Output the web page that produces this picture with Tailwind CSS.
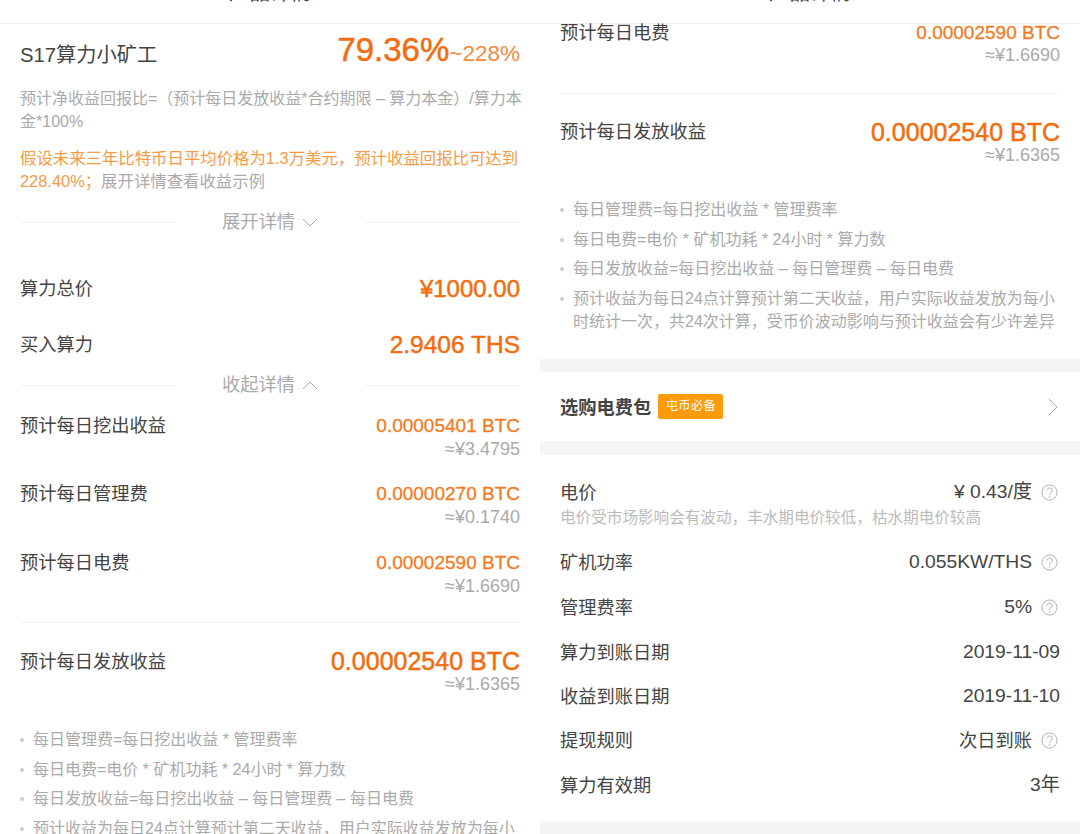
<!DOCTYPE html>
<html lang="zh-CN">
  <head>
    <meta charset="UTF-8" />
    <title>算力详情</title>
    <script src="https://cdn.jsdelivr.net/npm/@tailwindcss/browser@4"></script>
  </head>
  <body class="bg-white font-['Liberation_Sans','Noto_Sans_CJK_SC',sans-serif] text-[#444] text-[18.25px]">
    <div class="flex w-[1080px] h-[834px] overflow-hidden">
      <!-- left phone -->
      <div class="w-[540px] h-[834px] overflow-hidden flex flex-col">
        <div class="h-6 shrink-0 border-b border-[#f0f0f0] flex justify-center items-end overflow-hidden">
          <span class="text-[20.5px] leading-6 mb-[18px] text-[#444]">产品详情</span>
        </div>
        <div class="px-5">
          <div class="flex justify-between items-center h-[50px] mt-[3px]">
            <span class="text-[20.25px] mt-[6px]">S17算力小矿工</span>
            <span class="text-[#f26d0f] mt-[-4px]"><span class="text-[33px] [-webkit-text-stroke:0.5px_#f26d0f]">79.36%</span><span class="text-[#f58a3c] text-[22.5px]">~228%</span></span>
          </div>
          <p class="mt-[10px] text-[16px] leading-[23px] text-[#aaa] whitespace-nowrap">预计净收益回报比=（预计每日发放收益*合约期限 – 算力本金）/算力本<br />金*100%</p>
          <p class="mt-[14px] text-[16.4px] leading-[23px] text-[#f79a45] whitespace-nowrap">假设未来三年比特币日平均价格为1.3万美元，预计收益回报比可达到<br />228.40%；<span class="text-[#aaa]">展开详情查看收益示例</span></p>
          <div class="flex items-center h-6 mt-[17px]">
            <div class="w-[156px] border-t border-[#f2f2f2]"></div>
            <div class="flex-1 flex justify-center items-center gap-[7px] text-[#aaa]">展开详情
              <svg width="16" height="9" viewBox="0 0 16 9" fill="none" stroke="#aaa"><path d="M1 1l7 7 7-7" /></svg>
            </div>
            <div class="w-[156px] border-t border-[#f2f2f2]"></div>
          </div>
          <div class="flex justify-between items-center h-8 mt-[39px]">
            <span>算力总价</span><span class="text-[#f26d0f] text-2xl [-webkit-text-stroke:0.5px_#f26d0f]">¥1000.00</span>
          </div>
          <div class="flex justify-between items-center h-8 mt-6">
            <span>买入算力</span><span class="text-[#f26d0f] text-[24.5px] [-webkit-text-stroke:0.5px_#f26d0f]">2.9406 THS</span>
          </div>
          <div class="flex items-center h-6 mt-[12px]">
            <div class="w-[156px] border-t border-[#f2f2f2]"></div>
            <div class="flex-1 flex justify-center items-center gap-[7px] text-[#aaa]">收起详情
              <svg width="16" height="9" viewBox="0 0 16 9" fill="none" stroke="#aaa"><path d="M1 8l7-7 7 7" /></svg>
            </div>
            <div class="w-[156px] border-t border-[#f2f2f2]"></div>
          </div>
          <div class="flex justify-between mt-[17px] h-[46px]">
            <span class="leading-6">预计每日挖出收益</span>
            <div class="text-right"><div class="text-[19px] leading-6 text-[#f47a22] [-webkit-text-stroke:0.3px_#f47a22]">0.00005401 BTC</div><div class="text-[18px] leading-[22px] text-[#aaa]">≈¥3.4795</div></div>
          </div>
          <div class="flex justify-between mt-[22px] h-[46px]">
            <span class="leading-6">预计每日管理费</span>
            <div class="text-right"><div class="text-[19px] leading-6 text-[#f47a22] [-webkit-text-stroke:0.3px_#f47a22]">0.00000270 BTC</div><div class="text-[18px] leading-[22px] text-[#aaa]">≈¥0.1740</div></div>
          </div>
          <div class="flex justify-between mt-[23px] h-[46px]">
            <span class="leading-6">预计每日电费</span>
            <div class="text-right"><div class="text-[19px] leading-6 text-[#f47a22] [-webkit-text-stroke:0.3px_#f47a22]">0.00002590 BTC</div><div class="text-[18px] leading-[22px] text-[#aaa]">≈¥1.6690</div></div>
          </div>
          <div class="border-t border-[#f2f2f2] mt-[25px]"></div>
          <div class="flex justify-between mt-[24px] h-[50px]">
            <span class="leading-7 mt-[1px]">预计每日发放收益</span>
            <div class="text-right"><div class="text-[25px] leading-7 text-[#f26d0f] [-webkit-text-stroke:0.5px_#f26d0f]">0.00002540 BTC</div><div class="text-[18px] leading-[18px] text-[#aaa]">≈¥1.6365</div></div>
          </div>
          <ul class="mt-[31px] text-[16px] text-[#aaa] leading-[23px] space-y-[6.5px]">
            <li class="flex gap-[9px]"><span class="w-1 h-1 shrink-0 mt-[10px] rounded-full bg-[#ccc]"></span>每日管理费=每日挖出收益 * 管理费率</li>
            <li class="flex gap-[9px]"><span class="w-1 h-1 shrink-0 mt-[10px] rounded-full bg-[#ccc]"></span>每日电费=电价 * 矿机功耗 * 24小时 * 算力数</li>
            <li class="flex gap-[9px]"><span class="w-1 h-1 shrink-0 mt-[10px] rounded-full bg-[#ccc]"></span>每日发放收益=每日挖出收益 – 每日管理费 – 每日电费</li>
            <li class="flex gap-[9px]"><span class="w-1 h-1 shrink-0 mt-[10px] rounded-full bg-[#ccc]"></span><span class="whitespace-nowrap">预计收益为每日24点计算预计第二天收益，用户实际收益发放为每小<br />时统计一次，共24次计算，受币价波动影响与预计收益会有少许差异</span></li>
          </ul>
        </div>
      </div>
      <!-- right phone -->
      <div class="w-[540px] h-[834px] overflow-hidden flex flex-col">
        <div class="h-6 shrink-0 border-b border-[#f0f0f0] flex justify-center items-end overflow-hidden">
          <span class="text-[20.5px] leading-6 mb-[18px] text-[#444]">产品详情</span>
        </div>
        <div class="px-5">
          <div class="flex justify-between h-[46px]">
            <span class="leading-[18px]">预计每日电费</span>
            <div class="text-right"><div class="text-[19px] leading-[18px] text-[#f47a22] [-webkit-text-stroke:0.3px_#f47a22]">0.00002590 BTC</div><div class="text-[18px] leading-[26px] text-[#aaa]">≈¥1.6690</div></div>
          </div>
          <div class="border-t border-[#f2f2f2] mt-[23px]"></div>
          <div class="flex justify-between mt-[24px] h-[50px]">
            <span class="leading-7">预计每日发放收益</span>
            <div class="text-right"><div class="text-[25px] leading-7 text-[#f26d0f] [-webkit-text-stroke:0.5px_#f26d0f]">0.00002540 BTC</div><div class="text-[18px] leading-[18px] text-[#aaa]">≈¥1.6365</div></div>
          </div>
          <ul class="mt-[30px] text-[16px] text-[#aaa] leading-[23px] space-y-[6.5px]">
            <li class="flex gap-[9px]"><span class="w-1 h-1 shrink-0 mt-[10px] rounded-full bg-[#ccc]"></span>每日管理费=每日挖出收益 * 管理费率</li>
            <li class="flex gap-[9px]"><span class="w-1 h-1 shrink-0 mt-[10px] rounded-full bg-[#ccc]"></span>每日电费=电价 * 矿机功耗 * 24小时 * 算力数</li>
            <li class="flex gap-[9px]"><span class="w-1 h-1 shrink-0 mt-[10px] rounded-full bg-[#ccc]"></span>每日发放收益=每日挖出收益 – 每日管理费 – 每日电费</li>
            <li class="flex gap-[9px]"><span class="w-1 h-1 shrink-0 mt-[10px] rounded-full bg-[#ccc]"></span><span class="whitespace-nowrap">预计收益为每日24点计算预计第二天收益，用户实际收益发放为每小<br />时统计一次，共24次计算，受币价波动影响与预计收益会有少许差异</span></li>
          </ul>
        </div>
        <div class="h-[13px] bg-[#f5f5f5] mt-[26px] shrink-0"></div>
        <div class="h-[69px] shrink-0 px-5 flex items-center">
          <span class="font-bold mt-[3px]">选购电费包</span>
          <span class="ml-[7px] h-[25px] w-[65px] bg-[#ff9a0a] rounded-[2px] text-white text-[12.5px] flex items-center justify-center">屯币必备</span>
          <svg class="ml-auto mr-[1px] mt-[1px]" width="11" height="18" viewBox="0 0 11 18" fill="none" stroke="#aaa"><path d="M1 1l8 8-8 8" /></svg>
        </div>
        <div class="h-[14px] bg-[#f5f5f5] shrink-0"></div>
        <div class="px-5">
          <div class="mt-[26px] flex justify-between items-center h-6">
            <span>电价</span>
            <span class="flex items-center gap-[9px] mr-[2px] text-[19.25px]">¥ 0.43/度
              <svg width="17" height="17" viewBox="0 0 18 18" fill="none" stroke="#aaa"><circle cx="9" cy="9" r="8" /><path d="M6.3 7a2.8 2.8 0 1 1 4.3 2.3c-1 .6-1.6 1.1-1.6 2.2" /><circle cx="9" cy="13.8" r=".4" /></svg>
            </span>
          </div>
          <p class="text-[15.6px] leading-[21px] text-[#bbb] mt-[2px]">电价受市场影响会有波动，丰水期电价较低，枯水期电价较高</p>
          <div class="mt-[23px] flex justify-between items-center h-6">
            <span>矿机功率</span>
            <span class="flex items-center gap-[9px] mr-[2px] text-[19.25px]">0.055KW/THS
              <svg width="17" height="17" viewBox="0 0 18 18" fill="none" stroke="#aaa"><circle cx="9" cy="9" r="8" /><path d="M6.3 7a2.8 2.8 0 1 1 4.3 2.3c-1 .6-1.6 1.1-1.6 2.2" /><circle cx="9" cy="13.8" r=".4" /></svg>
            </span>
          </div>
          <div class="mt-[21px] flex justify-between items-center h-6">
            <span>管理费率</span>
            <span class="flex items-center gap-[9px] mr-[2px] text-[19.25px]">5%
              <svg width="17" height="17" viewBox="0 0 18 18" fill="none" stroke="#aaa"><circle cx="9" cy="9" r="8" /><path d="M6.3 7a2.8 2.8 0 1 1 4.3 2.3c-1 .6-1.6 1.1-1.6 2.2" /><circle cx="9" cy="13.8" r=".4" /></svg>
            </span>
          </div>
          <div class="mt-[21px] flex justify-between items-center h-6">
            <span>算力到账日期</span><span class="text-[19.25px]">2019-11-09</span>
          </div>
          <div class="mt-5 flex justify-between items-center h-6">
            <span>收益到账日期</span><span class="text-[19.25px]">2019-11-10</span>
          </div>
          <div class="mt-5 flex justify-between items-center h-6">
            <span>提现规则</span>
            <span class="flex items-center gap-[9px] mr-[2px]">次日到账
              <svg width="17" height="17" viewBox="0 0 18 18" fill="none" stroke="#aaa"><circle cx="9" cy="9" r="8" /><path d="M6.3 7a2.8 2.8 0 1 1 4.3 2.3c-1 .6-1.6 1.1-1.6 2.2" /><circle cx="9" cy="13.8" r=".4" /></svg>
            </span>
          </div>
          <div class="mt-[21px] flex justify-between items-center h-6">
            <span>算力有效期</span><span class="text-[19.25px]">3年</span>
          </div>
        </div>
        <div class="h-[14px] bg-[#f5f5f5] mt-[23px] shrink-0"></div>
      </div>
    </div>
  </body>
</html>
